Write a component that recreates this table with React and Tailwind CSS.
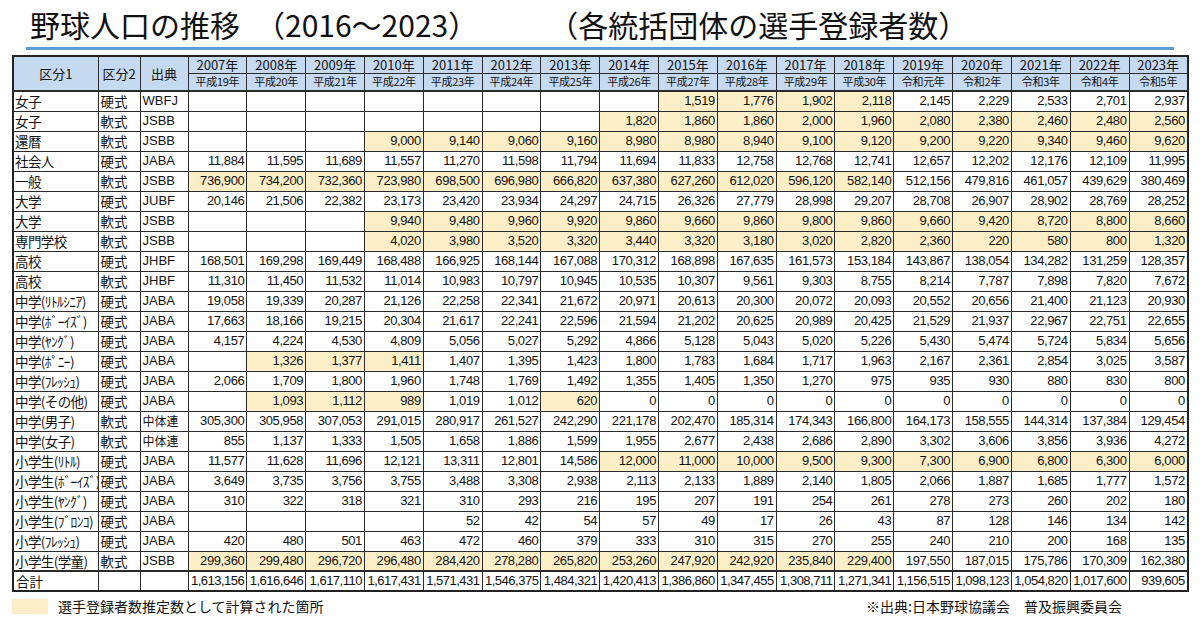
const years = [2007, 2008, 2009, 2010, 2011, 2012, 2013, 2014, 2015, 2016, 2017, 2018, 2019, 2020, 2021, 2022, 2023]
const eras = [
  '平成19年', '平成20年', '平成21年', '平成22年', '平成23年', '平成24年', '平成25年', '平成26年',
  '平成27年', '平成28年', '平成29年', '平成30年', '令和元年', '令和2年', '令和3年', '令和4年', '令和5年',
]

// y: [from, to] range of estimated (yellow) cells, by year index
const rows = [
  { k1: '女子', k2: '硬式', src: 'WBFJ', y: [[8, 11]], v: ['', '', '', '', '', '', '', '', '1,519', '1,776', '1,902', '2,118', '2,145', '2,229', '2,533', '2,701', '2,937'] },
  { k1: '女子', k2: '軟式', src: 'JSBB', y: [[7, 16]], v: ['', '', '', '', '', '', '', '1,820', '1,860', '1,860', '2,000', '1,960', '2,080', '2,380', '2,460', '2,480', '2,560'] },
  { k1: '還暦', k2: '軟式', src: 'JSBB', y: [[3, 16]], v: ['', '', '', '9,000', '9,140', '9,060', '9,160', '8,980', '8,980', '8,940', '9,100', '9,120', '9,200', '9,220', '9,340', '9,460', '9,620'] },
  { k1: '社会人', k2: '硬式', src: 'JABA', y: [], v: ['11,884', '11,595', '11,689', '11,557', '11,270', '11,598', '11,794', '11,694', '11,833', '12,758', '12,768', '12,741', '12,657', '12,202', '12,176', '12,109', '11,995'] },
  { k1: '一般', k2: '軟式', src: 'JSBB', y: [[0, 11]], v: ['736,900', '734,200', '732,360', '723,980', '698,500', '696,980', '666,820', '637,380', '627,260', '612,020', '596,120', '582,140', '512,156', '479,816', '461,057', '439,629', '380,469'] },
  { k1: '大学', k2: '硬式', src: 'JUBF', y: [], v: ['20,146', '21,506', '22,382', '23,173', '23,420', '23,934', '24,297', '24,715', '26,326', '27,779', '28,998', '29,207', '28,708', '26,907', '28,902', '28,769', '28,252'] },
  { k1: '大学', k2: '軟式', src: 'JSBB', y: [[3, 16]], v: ['', '', '', '9,940', '9,480', '9,960', '9,920', '9,860', '9,660', '9,860', '9,800', '9,860', '9,660', '9,420', '8,720', '8,800', '8,660'] },
  { k1: '専門学校', k2: '軟式', src: 'JSBB', y: [[3, 16]], v: ['', '', '', '4,020', '3,980', '3,520', '3,320', '3,440', '3,320', '3,180', '3,020', '2,820', '2,360', '220', '580', '800', '1,320'] },
  { k1: '高校', k2: '硬式', src: 'JHBF', y: [], v: ['168,501', '169,298', '169,449', '168,488', '166,925', '168,144', '167,088', '170,312', '168,898', '167,635', '161,573', '153,184', '143,867', '138,054', '134,282', '131,259', '128,357'] },
  { k1: '高校', k2: '軟式', src: 'JHBF', y: [], v: ['11,310', '11,450', '11,532', '11,014', '10,983', '10,797', '10,945', '10,535', '10,307', '9,561', '9,303', '8,755', '8,214', '7,787', '7,898', '7,820', '7,672'] },
  { k1: '中学(ﾘﾄﾙｼﾆｱ)', k2: '硬式', src: 'JABA', y: [], v: ['19,058', '19,339', '20,287', '21,126', '22,258', '22,341', '21,672', '20,971', '20,613', '20,300', '20,072', '20,093', '20,552', '20,656', '21,400', '21,123', '20,930'] },
  { k1: '中学(ﾎﾞｰｲｽﾞ)', k2: '硬式', src: 'JABA', y: [], v: ['17,663', '18,166', '19,215', '20,304', '21,617', '22,241', '22,596', '21,594', '21,202', '20,625', '20,989', '20,425', '21,529', '21,937', '22,967', '22,751', '22,655'] },
  { k1: '中学(ﾔﾝｸﾞ)', k2: '硬式', src: 'JABA', y: [], v: ['4,157', '4,224', '4,530', '4,809', '5,056', '5,027', '5,292', '4,866', '5,128', '5,043', '5,020', '5,226', '5,430', '5,474', '5,724', '5,834', '5,656'] },
  { k1: '中学(ﾎﾟﾆｰ)', k2: '硬式', src: 'JABA', y: [[1, 3]], v: ['', '1,326', '1,377', '1,411', '1,407', '1,395', '1,423', '1,800', '1,783', '1,684', '1,717', '1,963', '2,167', '2,361', '2,854', '3,025', '3,587'] },
  { k1: '中学(ﾌﾚｯｼｭ)', k2: '硬式', src: 'JABA', y: [], v: ['2,066', '1,709', '1,800', '1,960', '1,748', '1,769', '1,492', '1,355', '1,405', '1,350', '1,270', '975', '935', '930', '880', '830', '800'] },
  { k1: '中学(その他)', k2: '硬式', src: 'JABA', y: [[1, 3], [6, 6]], v: ['', '1,093', '1,112', '989', '1,019', '1,012', '620', '0', '0', '0', '0', '0', '0', '0', '0', '0', '0'] },
  { k1: '中学(男子)', k2: '軟式', src: '中体連', y: [], v: ['305,300', '305,958', '307,053', '291,015', '280,917', '261,527', '242,290', '221,178', '202,470', '185,314', '174,343', '166,800', '164,173', '158,555', '144,314', '137,384', '129,454'] },
  { k1: '中学(女子)', k2: '軟式', src: '中体連', y: [], v: ['855', '1,137', '1,333', '1,505', '1,658', '1,886', '1,599', '1,955', '2,677', '2,438', '2,686', '2,890', '3,302', '3,606', '3,856', '3,936', '4,272'] },
  { k1: '小学生(ﾘﾄﾙ)', k2: '硬式', src: 'JABA', y: [[7, 16]], v: ['11,577', '11,628', '11,696', '12,121', '13,311', '12,801', '14,586', '12,000', '11,000', '10,000', '9,500', '9,300', '7,300', '6,900', '6,800', '6,300', '6,000'] },
  { k1: '小学生(ﾎﾞｰｲｽﾞ)', k2: '硬式', src: 'JABA', y: [], v: ['3,649', '3,735', '3,756', '3,755', '3,488', '3,308', '2,938', '2,113', '2,133', '1,889', '2,140', '1,805', '2,066', '1,887', '1,685', '1,777', '1,572'] },
  { k1: '小学生(ﾔﾝｸﾞ)', k2: '硬式', src: 'JABA', y: [], v: ['310', '322', '318', '321', '310', '293', '216', '195', '207', '191', '254', '261', '278', '273', '260', '202', '180'] },
  { k1: '小学生(ﾌﾞﾛﾝｺ)', k2: '硬式', src: 'JABA', y: [], v: ['', '', '', '', '52', '42', '54', '57', '49', '17', '26', '43', '87', '128', '146', '134', '142'] },
  { k1: '小学(ﾌﾚｯｼｭ)', k2: '硬式', src: 'JABA', y: [], v: ['420', '480', '501', '463', '472', '460', '379', '333', '310', '315', '270', '255', '240', '210', '200', '168', '135'] },
  { k1: '小学生(学童)', k2: '軟式', src: 'JSBB', y: [[0, 11]], v: ['299,360', '299,480', '296,720', '296,480', '284,420', '278,280', '265,820', '253,260', '247,920', '242,920', '235,840', '229,400', '197,550', '187,015', '175,786', '170,309', '162,380'] },
]

const totals = ['1,613,156', '1,616,646', '1,617,110', '1,617,431', '1,571,431', '1,546,375', '1,484,321', '1,420,413', '1,386,860', '1,347,455', '1,308,711', '1,271,341', '1,156,515', '1,098,123', '1,054,820', '1,017,600', '939,605']

const isYellow = (ranges, i) => ranges.some(([a, b]) => i >= a && i <= b)

const jp = "font-['Noto_Sans_CJK_JP','Noto_Sans',sans-serif]"
const num = "font-['Liberation_Sans','Noto_Sans_CJK_JP',sans-serif]"
const cell = 'border border-[#2a2a2a] p-0 overflow-hidden whitespace-nowrap'

export default function App() {
  return (
    <div className="w-[1200px] h-[617px] bg-white overflow-hidden text-[#111]">
      <div className={`h-[47px] pt-[6px] pl-[30px] flex items-start text-[30px] leading-[36px] ${jp}`}>
        <span>野球人口の推移</span>
        <span className="ml-[15px]">（2016～2023）</span>
        <span className="ml-[70px]">（各統括団体の選手登録者数）</span>
      </div>
      <div className="ml-[26px] w-[1148px] h-[3px] bg-[#5b9bd5]" />

      <table className="mt-[5px] ml-[12px] w-[1175px] table-fixed border-collapse border-2 border-[#222]">
        <colgroup>
          <col className="w-[85px]" />
          <col className="w-[42px]" />
          <col className="w-[48px]" />
          {years.map((y) => (
            <col key={y} className="w-[58.82px]" />
          ))}
        </colgroup>
        <thead className={`bg-[#c5d9f1] ${jp}`}>
          <tr className="h-[17px]">
            <th rowSpan={2} className={`${cell} border-b-2 text-[13px] font-normal text-center`}>区分1</th>
            <th rowSpan={2} className={`${cell} border-b-2 text-[13px] font-normal text-center`}>区分2</th>
            <th rowSpan={2} className={`${cell} border-b-2 text-[13px] font-normal text-center`}>出典</th>
            {years.map((y) => (
              <th key={y} className={`${cell} text-[13px] leading-[15px] font-normal text-center`}>
                {y}年
              </th>
            ))}
          </tr>
          <tr className="h-[18px]">
            {eras.map((e) => (
              <th key={e} className={`${cell} border-b-2 text-[11px] leading-[15px] tracking-[-0.3px] font-normal text-center`}>
                {e}
              </th>
            ))}
          </tr>
        </thead>
        <tbody>
          {rows.map((r, ri) => (
            <tr key={ri} className="h-[20px]">
              <td className={`${cell} pl-[1px] text-[13.5px] tracking-[-0.6px] leading-[18px] ${jp}`}>{r.k1}</td>
              <td className={`${cell} pl-[2px] text-[13.5px] leading-[18px] ${jp}`}>{r.k2}</td>
              <td className={`${cell} pl-[2px] leading-[18px] ${r.src === '中体連' ? `text-[12px] ${jp}` : `text-[13px] ${num}`}`}>
                {r.src}
              </td>
              {r.v.map((val, i) => (
                <td
                  key={i}
                  className={`${cell} pr-[2px] text-right text-[13px] leading-[18px] tracking-[-0.4px] ${num} ${
                    isYellow(r.y, i) ? 'bg-[#fcefc8]' : ''
                  }`}
                >
                  {val}
                </td>
              ))}
            </tr>
          ))}
          <tr className="h-[20px]">
            <td className={`${cell} border-t-2 pl-[2px] text-[13.5px] leading-[18px] ${jp}`}>合計</td>
            <td className={`${cell} border-t-2`} />
            <td className={`${cell} border-t-2`} />
            {totals.map((t, i) => (
              <td key={i} className={`${cell} border-t-2 pr-[2px] text-right text-[13px] leading-[18px] tracking-[-0.5px] ${num}`}>
                {t}
              </td>
            ))}
          </tr>
        </tbody>
      </table>

      <div className={`mt-[6px] pl-[12px] flex items-center h-[17px] text-[14px] leading-[17px] ${jp}`}>
        <div className="w-[36px] h-[15px] bg-[#fcefc8]" />
        <span className="ml-[10px]">選手登録者数推定数として計算された箇所</span>
        <span className="ml-auto mr-[78px]">※出典:日本野球協議会　普及振興委員会</span>
      </div>
    </div>
  )
}
